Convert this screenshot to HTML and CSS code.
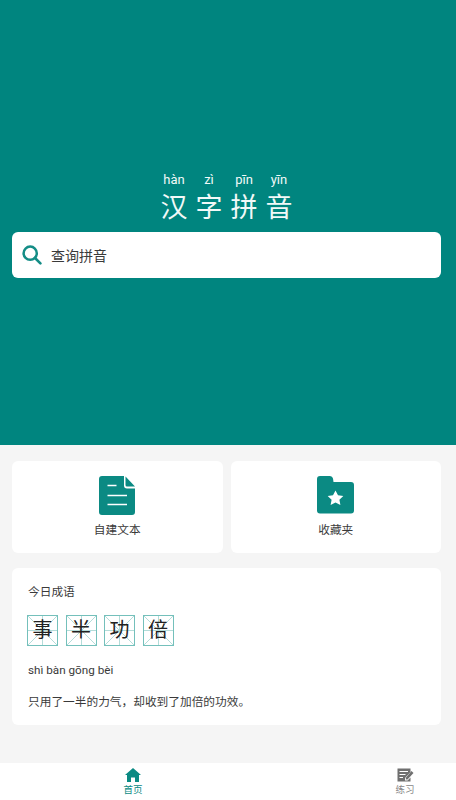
FILE: index.html
```html
<!DOCTYPE html>
<html>
  <head>
    <meta charset="utf-8">
    <title>汉字拼音</title>
    <link rel="stylesheet" href="styles.css">
  </head>
  <body>
    <div class="page">
      <div class="hero">
        <div class="logo">
          <div class="logo-col"><span class="logo-py">hàn</span><span class="logo-zi">汉</span></div>
          <div class="logo-col"><span class="logo-py">zì</span><span class="logo-zi">字</span></div>
          <div class="logo-col"><span class="logo-py">pīn</span><span class="logo-zi">拼</span></div>
          <div class="logo-col"><span class="logo-py">yīn</span><span class="logo-zi">音</span></div>
        </div>
        <div class="search">
          <svg class="search-icon" viewBox="0 0 20 20" width="20" height="20">
            <circle cx="8.200" cy="8.200" r="6.600" fill="none" stroke="#148d86" stroke-width="2.500"/>
            <path d="M13 13L18.400 18.400" stroke="#148d86" stroke-width="2.600" stroke-linecap="round"/>
          </svg>
          <span>查询拼音</span>
        </div>
      </div>

      <div class="tools">
        <div class="tool">
          <svg viewBox="0 0 36 39" width="36" height="39">
            <path d="M3 0H25V9.500Q25 12.500 28 12.500H36V36Q36 39 33 39H3Q0 39 0 36V3Q0 0 3 0Z" fill="#0b8a83"/>
            <path d="M26.500 0.500L36 10.500H28Q26.500 10.500 26.500 9Z" fill="#0b8a83"/>
            <path d="M8.500 9.500H17.500M8.500 19.500H28M8.500 28.500H28" stroke="#fff" stroke-width="1.600" fill="none"/>
          </svg>
          <span>自建文本</span>
        </div>
        <div class="tool">
          <svg viewBox="0 0 37 39" width="37" height="39">
            <path d="M3 0H13Q15.500 0 16 2.500L16.500 6H34Q37 6 37 9V34.500Q37 37.500 34 37.500H3Q0 37.500 0 34.500V3Q0 0 3 0Z" fill="#0b8a83"/>
            <path d="M18.500 14.500L21 19.300L26.300 20.100L22.400 23.800L23.400 29L18.500 26.500L13.600 29L14.600 23.800L10.700 20.100L16 19.300Z" fill="#fff"/>
          </svg>
          <span>收藏夹</span>
        </div>
      </div>

      <div class="idiom">
        <div class="idiom-title">今日成语</div>
        <div class="grids">
          <div class="grid-box">事</div>
          <div class="grid-box">半</div>
          <div class="grid-box">功</div>
          <div class="grid-box">倍</div>
        </div>
        <div class="idiom-py">shì bàn gōng bèi</div>
        <div class="idiom-desc">只用了一半的力气，却收到了加倍的功效。</div>
      </div>

      <div class="tabbar">
        <div class="tab tab-active">
          <svg viewBox="0 0 16 14" width="16" height="14">
            <path d="M8 0L16 7H14V14H10V9.500H6V14H2V7H0Z" fill="#0b8a83"/>
          </svg>
          <span>首页</span>
        </div>
        <div class="tab">
          <svg viewBox="0 0 17 14" width="17" height="14">
            <path d="M0.500 0.500H13.500V4L8 10V12.500H10.500L13.500 9.500V13.500H0.500Z" fill="#6f6f6f"/>
            <path d="M2.500 3.500H11M2.500 6.500H8.500M2.500 9.500H6" stroke="#fff" stroke-width="1"/>
            <path d="M14.500 3L16.500 5L10.500 11.500H8.800V9.800Z" fill="#6f6f6f"/>
          </svg>
          <span>练习</span>
        </div>
      </div>
    </div>
  </body>
</html>
```

FILE: styles.css
```css
body {
  margin: 0;
  padding: 0;
  font-family: "Roboto", "Noto Sans CJK SC", sans-serif;
  color: #3a3a3a;
  background-color: #f5f5f5;
}
.page {
  display: flex;
  flex-direction: column;
  height: 800px;
  overflow: hidden;
}
.hero {
  height: 445px;
  box-sizing: border-box;
  padding: 172px 15px 0 12px;
  background-color: #00857f;
}
.logo {
  display: flex;
  justify-content: center;
  gap: 6px;
  color: #f2f9f8;
}
.logo-col {
  display: flex;
  flex-direction: column;
  align-items: center;
  width: 29px;
}
.logo-py {
  font-size: 13px;
  line-height: 16px;
  white-space: nowrap;
}
.logo-zi {
  margin-top: 2px;
  font-size: 27px;
  line-height: 36px;
}
.search {
  display: flex;
  align-items: center;
  gap: 9px;
  height: 46px;
  margin-top: 6px;
  padding-left: 10px;
  background-color: #fff;
  border-radius: 6px;
  font-size: 14px;
}
.tools {
  display: flex;
  gap: 8px;
  margin: 16px 15px 0 12px;
}
.tool {
  flex: 1;
  display: flex;
  flex-direction: column;
  align-items: center;
  gap: 8px;
  height: 92px;
  box-sizing: border-box;
  padding-top: 15px;
  background-color: #fff;
  border-radius: 6px;
  font-size: 11.7px;
  line-height: 14px;
}
.idiom {
  height: 157px;
  box-sizing: border-box;
  margin: 15px 15px 0 12px;
  padding: 16px 16px 0;
  background-color: #fff;
  border-radius: 6px;
  font-size: 11.700px;
}
.idiom-title {
  line-height: 16px;
}
.grids {
  display: flex;
  gap: 7.500px;
  margin: 15px 0 0 -1px;
}
.grid-box {
  --line: #b4dcd9;
  width: 31px;
  height: 31px;
  box-sizing: border-box;
  border: 1.500px solid #74c0bb;
  font-size: 20px;
  line-height: 29px;
  text-align: center;
  color: #222;
  background-color: #fff;
  background-image:
    linear-gradient(45deg, transparent calc(50% - 0.5px), var(--line) calc(50% - 0.5px), var(--line) calc(50% + 0.5px), transparent calc(50% + 0.5px)),
    linear-gradient(-45deg, transparent calc(50% - 0.5px), var(--line) calc(50% - 0.5px), var(--line) calc(50% + 0.5px), transparent calc(50% + 0.5px)),
    linear-gradient(var(--line), var(--line)),
    linear-gradient(var(--line), var(--line));
  background-size: 100% 100%, 100% 100%, 100% 1px, 1px 100%;
  background-position: center;
  background-repeat: no-repeat;
}
.idiom-py {
  margin-top: 16px;
  line-height: 16px;
}
.idiom-desc {
  margin-top: 15px;
  line-height: 18px;
}
.tabbar {
  display: flex;
  justify-content: space-between;
  height: 37px;
  margin-top: auto;
  padding: 0 33px 0 115px;
  background-color: #fff;
}
.tab {
  width: 36px;
  display: flex;
  flex-direction: column;
  align-items: center;
  padding-top: 5px;
  font-size: 9.500px;
  line-height: 15px;
  color: #888;
}
.tab-active {
  color: #0b8a83;
}
```
